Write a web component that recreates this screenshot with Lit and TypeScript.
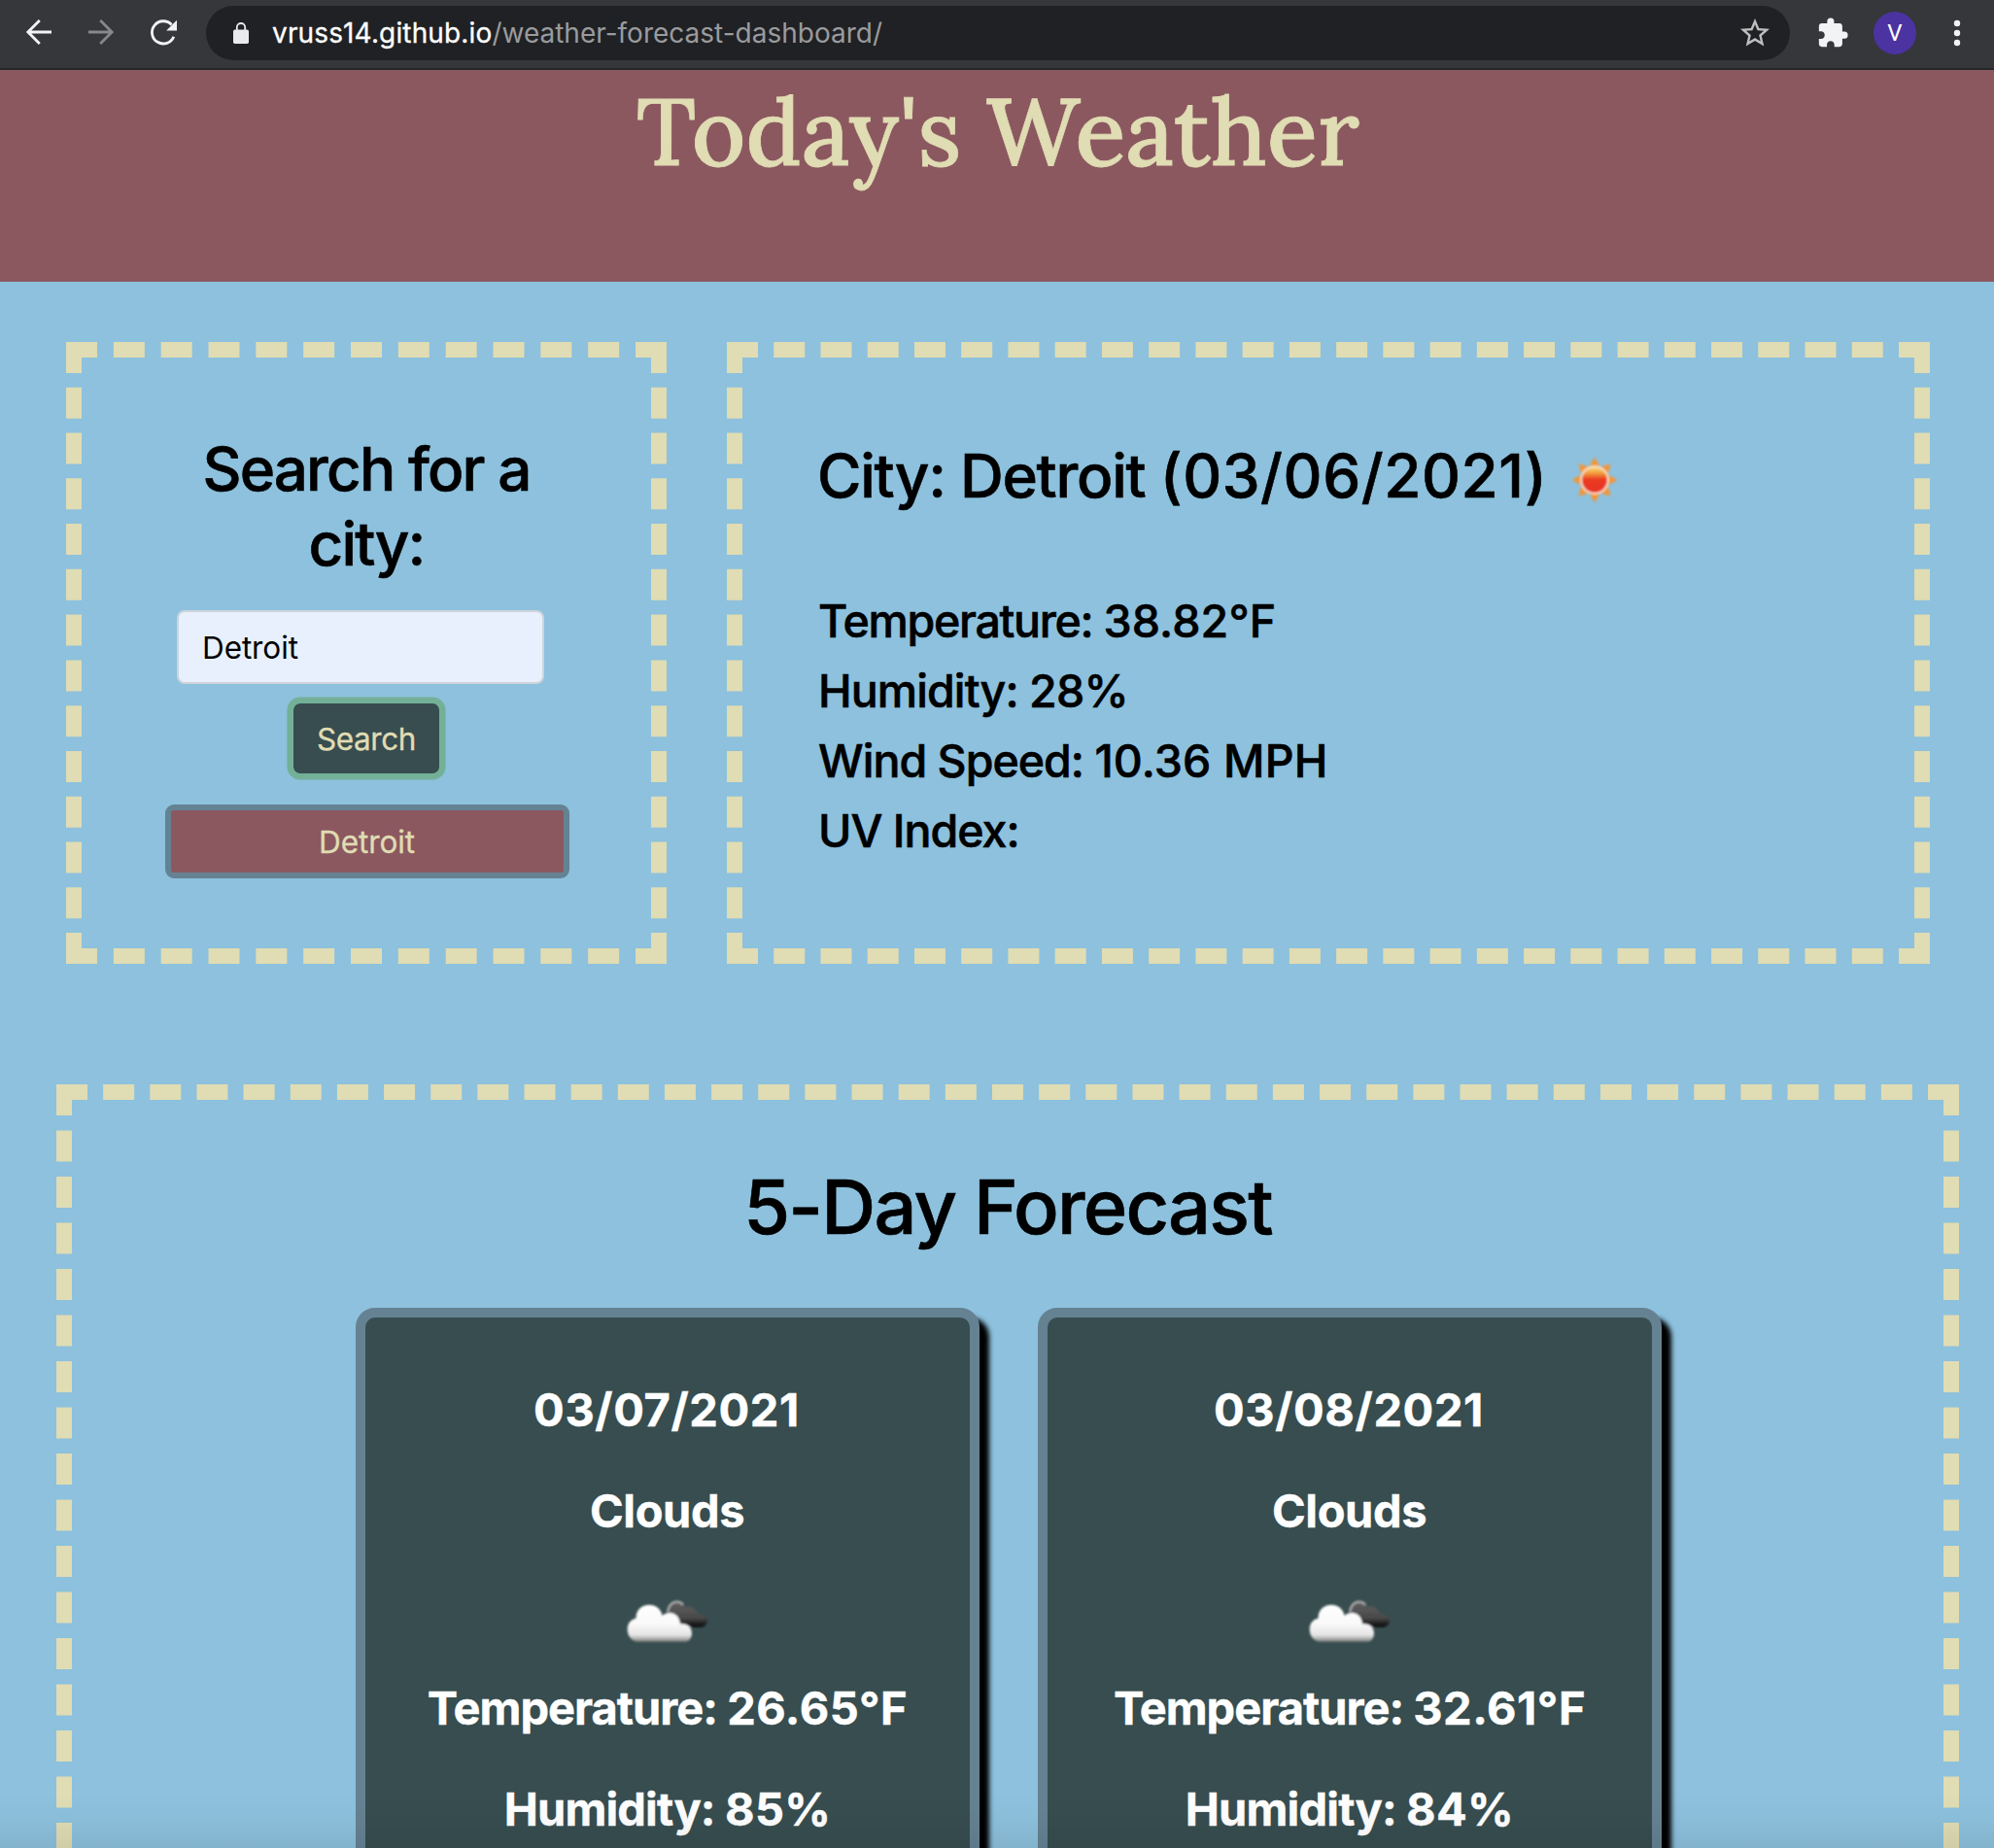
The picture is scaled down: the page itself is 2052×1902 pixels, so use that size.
import { LitElement, html, svg, css } from "lit";
import { customElement, property } from "lit/decorators.js";

interface Day {
  date: string;
  sky: string;
  temperature: string;
  humidity: string;
}

const forecast: Day[] = [
  { date: "03/07/2021", sky: "Clouds", temperature: "26.65°F", humidity: "85%" },
  { date: "03/08/2021", sky: "Clouds", temperature: "32.61°F", humidity: "84%" },
];

const sunRays = [0, 45, 90, 135, 180, 225, 270, 315];

@customElement("browser-bar")
export class BrowserBar extends LitElement {
  static styles = css`
    :host {
      display: flex;
      align-items: center;
      box-sizing: border-box;
      flex: none;
      height: 72px;
      padding: 0 34px 2px 26px;
      background: #36373b;
      border-bottom: 2px solid #262729;
      font-family: Inter, sans-serif;
    }
    svg {
      display: block;
      flex: none;
    }
    .forward {
      margin-left: 36px;
    }
    .reload {
      margin-left: 36px;
    }
    .omnibox {
      display: flex;
      align-items: center;
      box-sizing: border-box;
      flex: 1;
      height: 56px;
      margin: 0 27px 0 30px;
      padding: 0 18px 0 26px;
      border-radius: 28px;
      background: #202124;
      font-size: 28px;
      line-height: 34px;
    }
    .url {
      flex: 1;
      margin-left: 22px;
      color: #9a9b9d;
      white-space: nowrap;
    }
    .host {
      color: #fff;
      letter-spacing: 0.14px;
      -webkit-text-stroke: 0.3px currentColor;
    }
    .avatar {
      display: flex;
      align-items: center;
      justify-content: center;
      width: 44px;
      height: 44px;
      margin: 0 38px 0 25px;
      border-radius: 50%;
      background: #4b33a1;
      color: #fff;
      font: 400 24px/44px Roboto, sans-serif;
    }
  `;

  render() {
    return html`
      <svg class="back" width="28" height="28" viewBox="0 0 28 28" fill="none" stroke="#f1f3f4" stroke-width="2.8">
        <path d="M27 13H3M14.800 1 2.800 13l12 12" />
      </svg>
      <svg class="forward" width="28" height="28" viewBox="0 0 28 28" fill="none" stroke="#87888a" stroke-width="2.8">
        <path d="M1 13h24M13.200 1l12 12-12 12" />
      </svg>
      <svg class="reload" width="28" height="28" viewBox="0 0 28 28">
        <path d="M24.800 17.700A11.600 11.600 0 1 1 22.600 5.500" fill="none" stroke="#f1f3f4" stroke-width="2.8" />
        <path d="M28 .7V11.500H17.200z" fill="#f1f3f4" />
      </svg>
      <div class="omnibox">
        <svg width="20" height="24" viewBox="0 0 20 24">
          <path d="M5.800 9V6.200a4.200 4.200 0 0 1 8.400 0V9" fill="none" stroke="#e8eaed" stroke-width="1.8" />
          <rect x="2" y="8.500" width="16" height="14.500" rx="1.800" fill="#e8eaed" />
        </svg>
        <div class="url"><span class="host">vruss14.github.io</span>/weather-forecast-dashboard/</div>
        <svg width="36" height="36" viewBox="0 0 24 24" fill="#bdbebe">
          <path d="M22 9.240l-7.190-.620L12 2 9.190 8.630 2 9.240l5.460 4.730L5.820 21 12 17.270 18.180 21l-1.630-7.030L22 9.240zM12 15.400l-3.760 2.270 1-4.280-3.320-2.880 4.380-.380L12 6.100l1.710 4.040 4.380.380-3.320 2.880 1 4.280L12 15.400z" />
        </svg>
      </div>
      <svg width="34" height="34" viewBox="0 0 24 24" fill="#f1f3f4">
        <path d="M20.500 11H19V7c0-1.100-.900-2-2-2h-4V3.500a2.500 2.500 0 0 0-5 0V5H4c-1.100 0-2 .900-2 2v3.800h1.500c1.500 0 2.700 1.200 2.700 2.700S5 16.200 3.500 16.200H2V20c0 1.100.900 2 2 2h3.800v-1.500c0-1.500 1.200-2.700 2.700-2.700s2.700 1.200 2.700 2.700V22H17c1.100 0 2-.900 2-2v-4h1.500a2.500 2.500 0 0 0 0-5z" />
      </svg>
      <div class="avatar">V</div>
      <svg width="8" height="28" viewBox="0 0 8 28" fill="#f1f3f4">
        <circle cx="4" cy="4" r="3.2" />
        <circle cx="4" cy="14" r="3.2" />
        <circle cx="4" cy="24" r="3.2" />
      </svg>
    `;
  }
}

@customElement("day-card")
export class DayCard extends LitElement {
  @property({ attribute: false }) day!: Day;

  static styles = css`
    :host {
      display: flex;
      flex-direction: column;
      align-items: center;
      box-sizing: border-box;
      width: 642px;
      height: 860px;
      padding-top: 59px;
      border: 10px solid #658293;
      border-radius: 20px;
      background: #374d4f;
      box-shadow: 10px 10px 5px #000;
      color: #fff;
      font: 700 47px/72px Inter, sans-serif;
      -webkit-text-stroke: 0.4px currentColor;
    }
    .line {
      margin-bottom: 32px;
      white-space: pre;
    }
    .date {
      padding-right: 2px;
      letter-spacing: 0.6px;
    }
    .sky {
      margin: 0;
      padding-right: 1px;
      letter-spacing: -0.4px;
    }
    .temp {
      letter-spacing: -1px;
    }
    .hum {
      letter-spacing: -0.85px;
    }
    .value {
      letter-spacing: 0.5px;
    }
    .hum .value {
      letter-spacing: 0.3px;
    }
    svg {
      display: block;
      margin: 55px 0 30px;
      overflow: visible;
    }
  `;

  render() {
    const { date, sky, temperature, humidity } = this.day;
    return html`
      <div class="line date">${date}</div>
      <div class="line sky">${sky}</div>
      <svg width="84" height="46" viewBox="0 0 84 46">
        <defs>
          <linearGradient id="white" gradientUnits="userSpaceOnUse" x1="0" y1="6" x2="0" y2="44.500">
            <stop offset="0" stop-color="#fff" />
            <stop offset=".5" stop-color="#f9f9f9" />
            <stop offset=".8" stop-color="#e4e4e4" />
            <stop offset=".92" stop-color="#a4a4a4" />
            <stop offset="1" stop-color="#5a6060" />
          </linearGradient>
          <linearGradient id="dark" gradientUnits="userSpaceOnUse" x1="0" y1="2" x2="0" y2="28.500">
            <stop offset="0" stop-color="#626262" />
            <stop offset=".65" stop-color="#484848" />
            <stop offset="1" stop-color="#080808" />
          </linearGradient>
          <filter id="soft" x="-10%" y="-10%" width="120%" height="120%">
            <feGaussianBlur stdDeviation=".8" />
          </filter>
        </defs>
        <g filter="url(#soft)">
          <path
            fill="url(#dark)"
            d="M42 13C42.500 6 46 1.500 51.500 1.500c4 0 7.500 2.500 9 6.500 6-1.500 10.500 1 12.500 7 6 0 10 2.500 10 6.500s-3 7-7 7H54C46 27 41.500 21 42 13z"
          />
          <path fill="none" stroke="#adadad" stroke-width="2.2" d="M42 13c.500-6 4.500-10.500 9.500-10.500 3 0 5 1 6.500 3" />
          <path
            fill="url(#white)"
            d="M10 44C4 42 .7 37 .7 31 .7 25 4 21 9.500 19.500 9.500 11 15 5.700 23 5.700c7 0 12.500 4.500 13.500 11 2.500-2 5-2.700 7.500-2.700 6 0 10.500 4.500 11 11.300 6.500-1 12 2.700 12 9.700 0 5-3 8-6 9z"
          />
        </g>
      </svg>
      <div class="line temp">Temperature: <span class="value">${temperature}</span></div>
      <div class="line hum">Humidity: <span class="value">${humidity}</span></div>
    `;
  }
}

@customElement("app-root")
export class AppRoot extends LitElement {
  static styles = css`
    :host {
      display: flex;
      flex-direction: column;
      position: relative;
      width: 2052px;
      height: 1902px;
      overflow: hidden;
      background: #8dc1dd;
      color: #000;
      font-family: Inter, sans-serif;
    }
    .banner {
      box-sizing: border-box;
      flex: none;
      height: 218px;
      padding: 5px 0 0 2px;
      background: #8b5860;
      text-align: center;
    }
    h1,
    h2,
    h3,
    p {
      margin: 0;
      font-weight: 500;
      -webkit-text-stroke: 0.6px currentColor;
    }
    h1 {
      color: #e0dcb3;
      font: 500 96px/115.2px Lora, "Liberation Serif", serif;
      letter-spacing: 0.1px;
      -webkit-text-stroke: 0.8px currentColor;
    }
    .top {
      display: flex;
      gap: 62px;
      flex: none;
      padding: 62px 66px 0 68px;
    }
    .panel {
      box-sizing: border-box;
      height: 640px;
      border: 16px dashed #e0dcb3;
    }
    .search {
      display: flex;
      flex-direction: column;
      align-items: center;
      width: 618px;
      padding: 77px 86px 0;
    }
    .search h3 {
      font-size: 62px;
      line-height: 76.8px;
      letter-spacing: -1.9px;
      text-align: center;
    }
    input {
      box-sizing: border-box;
      width: 378px;
      height: 76px;
      margin: 29px 12px 0 0;
      padding: 2px 24px 0;
      border: 2px solid #ced4da;
      border-radius: 8px;
      outline: none;
      background: #e8f0fe;
      color: #000;
      font: 400 31.5px/48px Inter, sans-serif;
      letter-spacing: -0.1px;
    }
    button {
      display: block;
      box-sizing: border-box;
      padding: 2px 0 0;
      font: 400 31.5px/48px Inter, sans-serif;
      color: #e0dcb3;
      -webkit-text-stroke: 0.3px currentColor;
    }
    .go {
      width: 150px;
      height: 72px;
      margin-top: 20px;
      border: 0;
      border-radius: 7px;
      background: #374d4f;
      box-shadow: 0 0 0 6.6px #73b098;
      letter-spacing: -0.4px;
    }
    .recent {
      width: 416px;
      height: 76px;
      margin: 32px 0 0 2px;
      padding-right: 1px;
      border: 6px solid #658293;
      border-radius: 9px;
      background: #8b5860;
      letter-spacing: -0.1px;
    }
    .current {
      flex: 1;
      padding: 83px 0 0 77px;
      white-space: pre;
    }
    .place {
      display: flex;
      align-items: center;
      gap: 25px;
      height: 77px;
      margin-bottom: 75px;
    }
    .place h2 {
      font-size: 62px;
      line-height: 79px;
      letter-spacing: -1.25px;
    }
    .place svg {
      margin-top: 8px;
    }
    .date {
      letter-spacing: 0.55px;
    }
    .current p {
      padding-left: 1px;
      font-size: 46.5px;
      line-height: 72px;
      letter-spacing: -1px;
    }
    .current .temp {
      letter-spacing: -1.3px;
    }
    .current .hum {
      letter-spacing: -0.9px;
    }
    .current .wind {
      letter-spacing: -0.98px;
    }
    .value {
      letter-spacing: 0.15px;
    }
    .hum .value {
      letter-spacing: -0.8px;
    }
    .forecast {
      box-sizing: border-box;
      flex: none;
      width: 1958px;
      height: 1362px;
      margin: 124px 0 0 58px;
      padding-top: 62px;
      border: 16px dashed #e0dcb3;
    }
    .forecast h2 {
      font-size: 77.5px;
      line-height: 96px;
      letter-spacing: -1.82px;
      text-align: center;
    }
    .cards {
      display: flex;
      justify-content: center;
      gap: 60px;
      margin-top: 56px;
      padding-left: 2px;
    }
    .shade {
      position: absolute;
      left: 0;
      right: 0;
      bottom: 0;
      height: 56px;
      background: linear-gradient(rgba(0, 0, 0, 0), rgba(0, 0, 0, 0.025) 50%, rgba(0, 0, 0, 0.07));
    }
  `;

  render() {
    return html`
      <browser-bar></browser-bar>
      <header class="banner"><h1>Today's Weather</h1></header>
      <section class="top">
        <div class="panel search">
          <h3>Search for a<br />city:</h3>
          <input type="text" .value=${"Detroit"} />
          <button class="go">Search</button>
          <button class="recent">Detroit</button>
        </div>
        <div class="panel current"><div class="place"><h2>City: Detroit <span class="date">(03/06/2021)</span></h2>${this.sun()}</div><p class="temp">Temperature: <span class="value">38.82°F</span></p><p class="hum">Humidity: <span class="value">28%</span></p><p class="wind">Wind Speed: <span class="value">10.36 MPH</span></p><p>UV Index:</p></div>
      </section>
      <section class="forecast">
        <h2>5-Day Forecast</h2>
        <div class="cards">${forecast.map((day) => html`<day-card .day=${day}></day-card>`)}</div>
      </section>
      <div class="shade"></div>
    `;
  }

  private sun() {
    return html`<svg width="48" height="48" viewBox="-24 -24 48 48">
      <defs>
        <linearGradient id="core" x1="0" y1="0" x2="0" y2="1">
          <stop offset="0" stop-color="#f8d878" />
          <stop offset=".22" stop-color="#f3a03c" />
          <stop offset=".48" stop-color="#ea3a24" />
          <stop offset="1" stop-color="#e93223" />
        </linearGradient>
        <filter id="soft" x="-10%" y="-10%" width="120%" height="120%">
          <feGaussianBlur stdDeviation=".8" />
        </filter>
      </defs>
      <g filter="url(#soft)">
        ${sunRays.map((a) => svg`<path d="M-5.500 -14 0 -23.500 5.500 -14z" fill="#f0973c" transform="rotate(${a})" />`)}
        <circle r="14.800" fill="#f7e3cf" />
        <circle r="13" fill="url(#core)" />
      </g>
    </svg>`;
  }
}
